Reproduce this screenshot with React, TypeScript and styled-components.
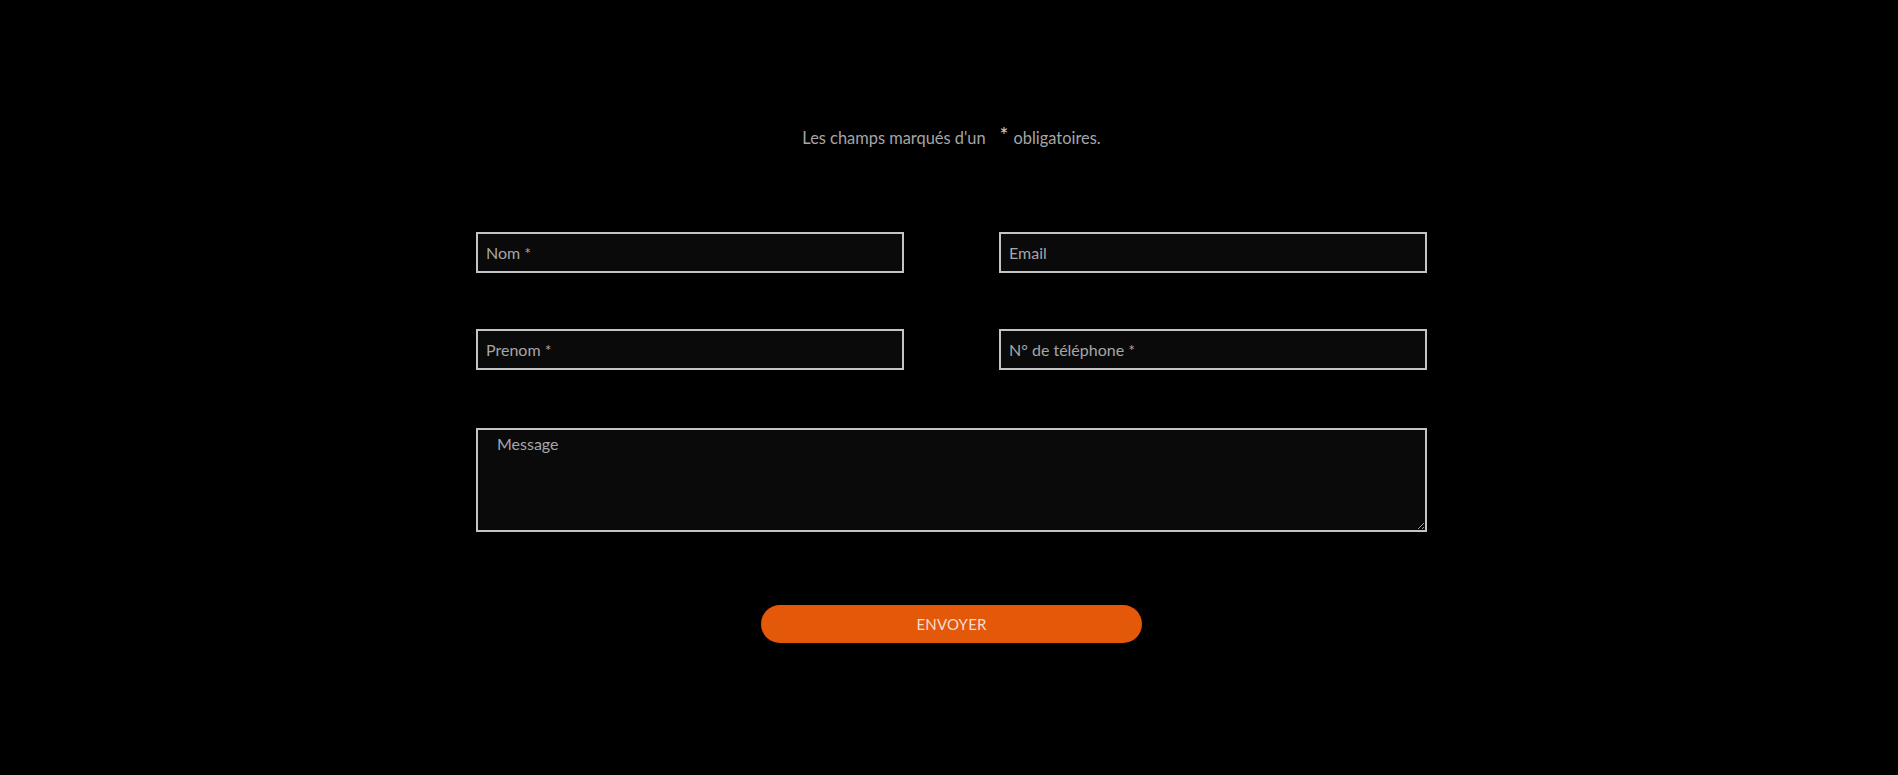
import React from "react";
import styled, { createGlobalStyle } from "styled-components";

const GlobalStyle = createGlobalStyle`
  html, body {
    margin: 0;
    padding: 0;
    background: #000;
  }
  body {
    font-family: Lato, "Open Sans", sans-serif;
  }
`;

const Page = styled.div`
  min-height: 775px;
  background: #000;
  padding: 128px 0 0 5px;
  box-sizing: border-box;
`;

const Form = styled.form`
  width: 951px;
  margin: 0 auto;
  display: flex;
  flex-direction: column;
  align-items: stretch;
`;

const Notice = styled.p`
  margin: 0 0 84px;
  text-align: center;
  color: #a6a6a6;
  font-size: 16.4px;
  line-height: 20px;
`;

const Star = styled.span`
  display: inline-block;
  font-size: 21px;
  color: #d0d0d0;
  margin: 0 5px 0 14px;
  vertical-align: 1px;
  line-height: 10px;
`;

const Grid = styled.div`
  display: grid;
  grid-template-columns: 428px 428px;
  column-gap: 95px;
  row-gap: 56px;
`;

const fieldBase = `
  box-sizing: border-box;
  background: #0a0a0a;
  border: 2px solid #c4c4c4;
  border-radius: 0;
  color: #ddd;
  font-family: Lato, "Open Sans", sans-serif;
  font-size: 16px;
  outline: none;
  &::placeholder {
    color: #a6a6a6;
    opacity: 1;
  }
`;

const Input = styled.input`
  ${fieldBase}
  height: 41px;
  width: 100%;
  padding: 0 8px;
`;

const TextArea = styled.textarea`
  ${fieldBase}
  margin-top: 58px;
  width: 100%;
  height: 104px;
  padding: 4px 19px;
  resize: vertical;
  display: block;
`;

const Submit = styled.button`
  align-self: center;
  margin-top: 73px;
  width: 381px;
  height: 38px;
  border: none;
  border-radius: 19px;
  background: #e4580a;
  color: #f7dccd;
  font-family: Lato, "Open Sans", sans-serif;
  font-size: 15px;
  letter-spacing: 0.2px;
  cursor: pointer;
`;

export default function App() {
  return (
    <Page>
      <GlobalStyle />
      <Form onSubmit={(e) => e.preventDefault()}>
        <Notice>
          Les champs marqués d'un<Star>*</Star>obligatoires.
        </Notice>
        <Grid>
          <Input type="text" placeholder="Nom *" />
          <Input type="email" placeholder="Email" />
          <Input type="text" placeholder="Prenom *" />
          <Input type="tel" placeholder="N° de téléphone *" />
        </Grid>
        <TextArea placeholder="Message" />
        <Submit type="submit">ENVOYER</Submit>
      </Form>
    </Page>
  );
}
